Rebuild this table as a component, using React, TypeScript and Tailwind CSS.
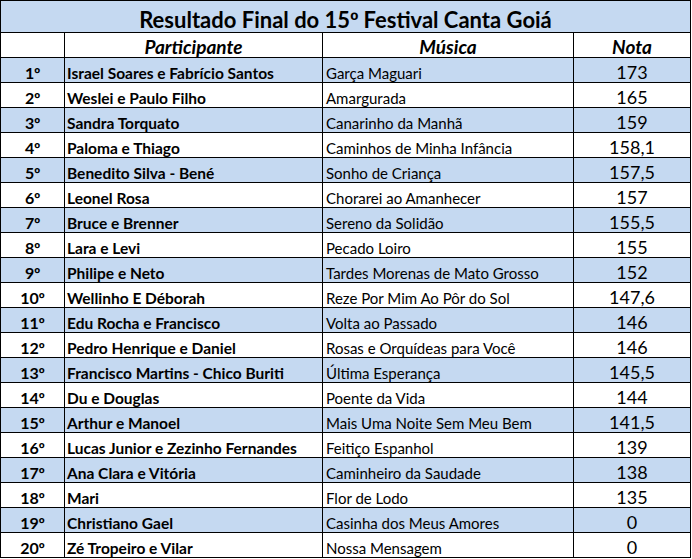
const rows: Array<[string, string, string, string]> = [
  ["1", "Israel Soares e Fabrício Santos", "Garça Maguari", "173"],
  ["2", "Weslei e Paulo Filho", "Amargurada", "165"],
  ["3", "Sandra Torquato", "Canarinho da Manhã", "159"],
  ["4", "Paloma e Thiago", "Caminhos de Minha Infância", "158,1"],
  ["5", "Benedito Silva - Bené", "Sonho de Criança", "157,5"],
  ["6", "Leonel Rosa", "Chorarei ao Amanhecer", "157"],
  ["7", "Bruce e Brenner", "Sereno da Solidão", "155,5"],
  ["8", "Lara e Levi", "Pecado Loiro", "155"],
  ["9", "Philipe e Neto", "Tardes Morenas de Mato Grosso", "152"],
  ["10", "Wellinho E Déborah", "Reze Por Mim Ao Pôr do Sol", "147,6"],
  ["11", "Edu Rocha e Francisco", "Volta ao Passado", "146"],
  ["12", "Pedro Henrique e Daniel", "Rosas e Orquídeas para Você", "146"],
  ["13", "Francisco Martins - Chico Buriti", "Última Esperança", "145,5"],
  ["14", "Du e Douglas", "Poente da Vida", "144"],
  ["15", "Arthur e Manoel", "Mais Uma Noite Sem Meu Bem", "141,5"],
  ["16", "Lucas Junior e Zezinho Fernandes", "Feitiço Espanhol", "139"],
  ["17", "Ana Clara e Vitória", "Caminheiro da Saudade", "138"],
  ["18", "Mari", "Flor de Lodo", "135"],
  ["19", "Christiano Gael", "Casinha dos Meus Amores", "0"],
  ["20", "Zé Tropeiro e Vilar", "Nossa Mensagem", "0"],
];

// Lato's º has no underline, Arial-metric Liberation Sans does
function Ordinal() {
  return <span className="font-['Liberation_Sans',sans-serif] leading-[0]">º</span>;
}

const cell = "flex h-[24px] items-end whitespace-nowrap pb-[1px] leading-none";

export default function App() {
  return (
    <div className="h-[559px] w-[692px] bg-white font-['Lato',sans-serif] text-black">
      <div className="grid w-[691px] grid-cols-[63px_257px_250px_116px] gap-px border border-black bg-black">
        <div className="col-span-4 flex h-[31px] items-end justify-center bg-[#c5d9f1] pb-[1px] text-[22px] font-bold leading-none">
          <span>
            Resultado Final do 15<Ordinal /> Festival Canta Goiá
          </span>
        </div>

        <div className={`${cell} bg-white`}></div>
        <div className={`${cell} justify-center bg-white text-[19px] font-bold italic`}>Participante</div>
        <div className={`${cell} justify-center bg-white text-[19px] font-bold italic`}>Música</div>
        <div className={`${cell} justify-center bg-white text-[19px] font-bold italic`}>Nota</div>

        {rows.map(([pos, name, song, score], index) => {
          const rowBg = index % 2 === 0 ? "bg-[#c5d9f1]" : "bg-white";
          return (
            <div key={pos} className="contents">
              <div className={`${cell} ${rowBg} justify-center text-[16px] font-bold`}>
                <span>
                  {pos}
                  <Ordinal />
                </span>
              </div>
              <div className={`${cell} ${rowBg} pl-[2px] text-[15.5px] font-bold`}>{name}</div>
              <div className={`${cell} ${rowBg} pl-[3px] text-[15px]`}>{song}</div>
              <div className={`${cell} ${rowBg} justify-center text-[18px]`}>{score}</div>
            </div>
          );
        })}
      </div>
    </div>
  );
}
